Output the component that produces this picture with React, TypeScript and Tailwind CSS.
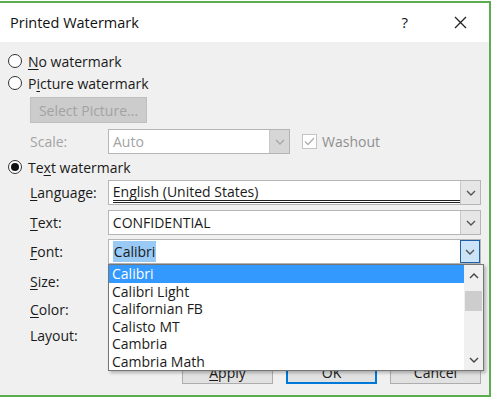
import React from "react";

const font = { fontFamily: '"Open Sans", "Noto Sans", sans-serif' };

function Radio({ checked }: { checked?: boolean }) {
  return (
    <span className="flex h-[14px] w-[14px] items-center justify-center rounded-full border border-[#333] bg-white">
      {checked && <span className="h-[8px] w-[8px] rounded-full bg-[#111]" />}
    </span>
  );
}

function Chevron({ color = "#555", up = false }: { color?: string; up?: boolean }) {
  return (
    <svg width="10" height="6" viewBox="0 0 10 6" className={up ? "rotate-180" : ""}>
      <path d="M1 1 L5 5 L9 1" fill="none" stroke={color} strokeWidth="1.4" />
    </svg>
  );
}

function Combo({
  text,
  disabled,
  active,
  className = "",
  children,
}: {
  text?: string;
  disabled?: boolean;
  active?: boolean;
  className?: string;
  children?: React.ReactNode;
}) {
  return (
    <div className={`flex h-[25px] border border-[#b5b5b5] bg-white ${className}`}>
      <div className={`flex flex-1 items-center pl-[4px] text-[14px] ${disabled ? "text-[#a3a3a3]" : "text-[#1a1a1a]"}`}>
        {children ?? text}
      </div>
      <div
        className={`flex w-[20px] items-center justify-center border-l ${
          active
            ? "border border-[#1f5fa8] bg-[#cce4f7]"
            : disabled
            ? "border-[#c8c8c8] bg-[#d6d6d6]"
            : "border-[#c8c8c8] bg-[#e6e6e6]"
        }`}
      >
        <Chevron color={disabled ? "#a8a8a8" : "#555"} />
      </div>
    </div>
  );
}

export default function App() {
  const items = ["Calibri", "Calibri Light", "Californian FB", "Calisto MT", "Cambria", "Cambria Math"];
  return (
    <div className="relative h-[400px] w-[493px] overflow-hidden bg-white" style={font}>
      <div className="ml-0 mt-[1px] flex h-[396px] w-[491px] flex-col border-y-2 border-r-2 border-[#5cad4f] bg-[#f0f0f0]">
        {/* title bar */}
        <div className="flex h-[39px] items-center bg-white pl-[10px] pr-[22px] text-[14.5px] text-[#111]">
          <span className="flex-1">Printed Watermark</span>
          <span className="mr-[46px] text-[15px]">?</span>
          <svg width="13" height="13" viewBox="0 0 13 13">
            <path d="M1 1 L12 12 M12 1 L1 12" stroke="#222" strokeWidth="1.3" />
          </svg>
        </div>

        <div className="flex flex-col pl-[8px] pr-[8px] text-[14px] text-[#1a1a1a]">
          <div className="mt-[10px] flex h-[18px] items-center gap-[6px]">
            <Radio />
            <span>
              <span className="underline underline-offset-2">N</span>o watermark
            </span>
          </div>
          <div className="mt-[4px] flex h-[18px] items-center gap-[6px]">
            <Radio />
            <span>
              P<span className="underline underline-offset-2">i</span>cture watermark
            </span>
          </div>
          <div className="ml-[22px] mt-[5px] flex h-[26px] w-[117px] items-center justify-center border border-[#bfbfbf] bg-[#cccccc] text-[#a3a3a3]">
            Select Picture...
          </div>
          <div className="ml-[22px] mt-[6px] flex items-center">
            <span className="w-[78px] text-[#a3a3a3]">Scale:</span>
            <Combo text="Auto" disabled className="w-[182px]" />
            <span className="ml-[12px] flex h-[15px] w-[15px] items-center justify-center border border-[#c4c4c4] bg-white">
              <svg width="11" height="9" viewBox="0 0 11 9">
                <path d="M1 4.5 L4 7.5 L10 1" fill="none" stroke="#b0b0b0" strokeWidth="1.3" />
              </svg>
            </span>
            <span className="ml-[5px] text-[#8f8f8f]">Washout</span>
          </div>
          <div className="mt-[3px] flex h-[20px] items-center gap-[6px]">
            <Radio checked />
            <span>
              Te<span className="underline underline-offset-2">x</span>t watermark
            </span>
          </div>
          <div className="ml-[22px] mt-[3px] flex items-center">
            <span className="w-[78px]">
              <span className="underline underline-offset-2">L</span>anguage:
            </span>
            <Combo className="w-[374px]">
              <div className="flex h-[20px] w-full items-center border-b-[3px] border-double border-[#222]">
                English (United States)
              </div>
            </Combo>
          </div>
          <div className="ml-[22px] mt-[5px] flex items-center">
            <span className="w-[78px]">
              <span className="underline underline-offset-2">T</span>ext:
            </span>
            <Combo text="CONFIDENTIAL" className="w-[374px]" />
          </div>
          <div className="ml-[22px] mt-[4px] flex items-center">
            <span className="w-[78px]">
              <span className="underline underline-offset-2">F</span>ont:
            </span>
            <Combo active className="w-[374px]">
              <span className="bg-[#99c9f5] px-[1px]">Calibri</span>
            </Combo>
          </div>
          <div className="ml-[22px] mt-[4px] flex h-[26px] items-center">
            <span>
              <span className="underline underline-offset-2">S</span>ize:
            </span>
          </div>
          <div className="ml-[22px] mt-[2px] flex h-[26px] items-center">
            <span>
              <span className="underline underline-offset-2">C</span>olor:
            </span>
          </div>
          <div className="ml-[22px] mt-[0px] flex h-[26px] items-center">
            <span>Layout:</span>
          </div>
          <div className="mt-[13px] flex justify-end gap-[13px] pr-[0px]">
            <div className="flex h-[23px] w-[91px] items-center justify-center border border-[#adadad] bg-[#e1e1e1]">
              <span className="underline underline-offset-2">A</span>pply
            </div>
            <div className="flex h-[23px] w-[91px] items-center justify-center border-2 border-[#0078d7] bg-[#e1e1e1]">
              OK
            </div>
            <div className="flex h-[23px] w-[91px] items-center justify-center border border-[#adadad] bg-[#e1e1e1]">
              Cancel
            </div>
          </div>
        </div>
      </div>

      {/* dropdown list */}
      <div className="absolute left-[108px] top-[264px] flex h-[107px] w-[376px] border border-[#767676] bg-white text-[14px] text-[#1a1a1a] shadow-[2px_2px_3px_rgba(0,0,0,0.25)]">
        <div className="flex flex-1 flex-col">
          {items.map((it, i) => (
            <div
              key={it}
              className={`flex h-[17.5px] items-center pl-[3px] ${i === 0 ? "bg-[#3399ff] text-white" : ""}`}
            >
              {it}
            </div>
          ))}
        </div>
        <div className="flex w-[19px] flex-col items-center bg-[#f0f0f0]">
          <div className="flex h-[22px] items-center justify-center">
            <Chevron up color="#444" />
          </div>
          <div className="mt-[4px] h-[20px] w-[17px] bg-[#cdcdcd]" />
          <div className="flex-1" />
          <div className="flex h-[20px] items-center justify-center">
            <Chevron color="#444" />
          </div>
        </div>
      </div>
    </div>
  );
}
